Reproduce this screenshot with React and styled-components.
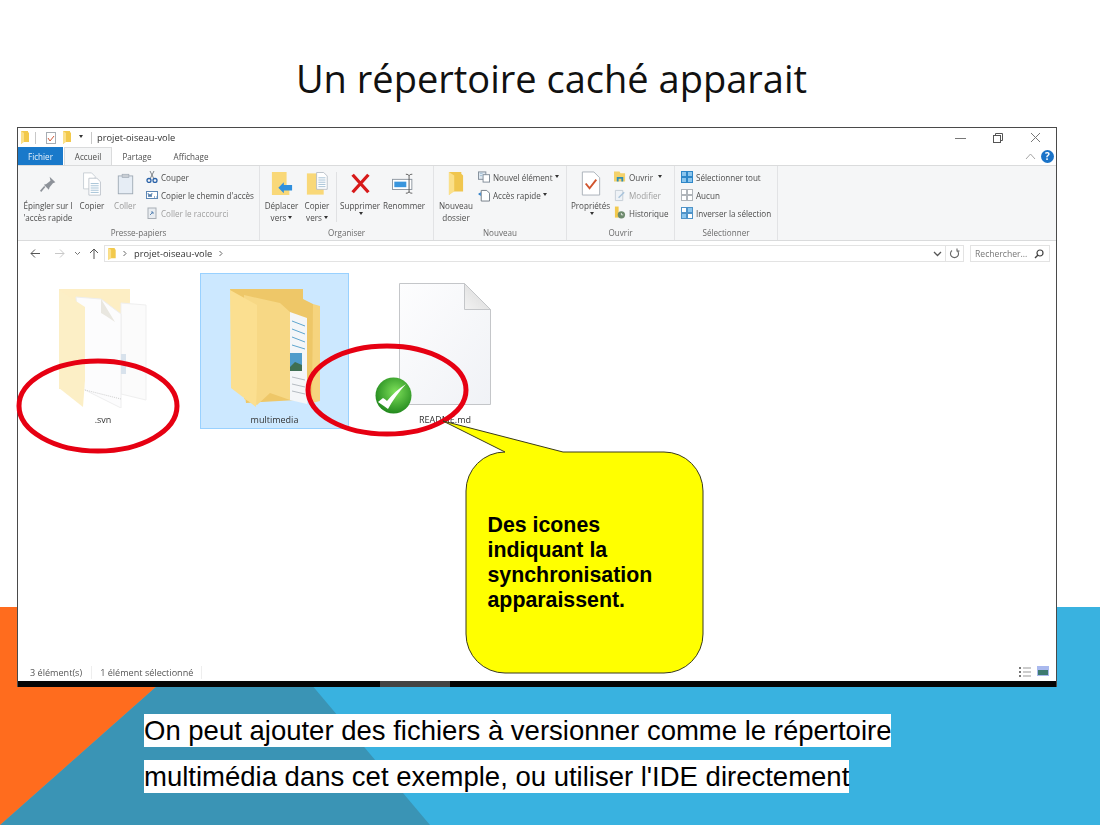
import React from "react";
import styled, { createGlobalStyle } from "styled-components";

const GlobalStyle = createGlobalStyle`
  html, body {
    margin: 0;
    padding: 0;
    background: #fff;
  }
`;

const Page = styled.div`
  position: relative;
  width: 1100px;
  height: 825px;
  overflow: hidden;
  background: #fff;
  font-family: "Open Sans", "Noto Sans", sans-serif;
`;

const Backdrop = styled.svg`
  position: absolute;
  left: 0;
  top: 607px;
`;

const Content = styled.div`
  position: relative;
  display: flex;
  flex-direction: column;
`;

const Title = styled.h1`
  margin: 0;
  height: 127px;
  padding: 54px 0 0 3px;
  box-sizing: border-box;
  text-align: center;
  font-size: 38px;
  line-height: 48px;
  font-weight: 400;
  color: #111;
`;

const Window = styled.div`
  margin-left: 17px;
  width: 1040px;
  height: 560px;
  box-sizing: border-box;
  border: 1px solid #4a4a4a;
  border-bottom: none;
  background: #fff;
  display: flex;
  flex-direction: column;
  font-size: 8.1px;
  color: #4c4c4c;
  filter: blur(0.25px);
`;

const TitleBar = styled.div`
  height: 19px;
  flex: none;
  display: flex;
  align-items: center;
  padding-left: 3px;
  font-size: 9.3px;
  color: #333;
`;

const QuickIcons = styled.div`
  display: flex;
  align-items: center;
  height: 13px;
  margin-right: 5px;
`;

const QuickSlot = styled.span`
  display: flex;
  align-items: center;
  margin-left: ${({ $ml }) => $ml}px;
`;

const QuickSep = styled.span`
  width: 1px;
  height: 12px;
  background: #c8c8c8;
`;

const WindowControls = styled.div`
  margin-left: auto;
  display: flex;
  align-items: center;
  gap: 27px;
  padding-right: 15px;
`;

const TabBar = styled.div`
  height: 18px;
  flex: none;
  display: flex;
  align-items: stretch;
  position: relative;
`;

const FileTab = styled.div`
  width: 45px;
  background: #1979ca;
  color: #e8f2fb;
  display: flex;
  align-items: center;
  justify-content: center;
`;

const Tab = styled.div`
  width: ${({ $w }) => $w}px;
  display: flex;
  align-items: center;
  justify-content: center;
  box-sizing: border-box;
  ${({ $active }) =>
    $active
      ? "background:#f5f6f7;border:1px solid #dadbdc;border-bottom:none;margin-left:1px;"
      : ""}
`;

const TabTail = styled.div`
  margin-left: auto;
  display: flex;
  align-items: center;
  gap: 5px;
  padding-right: 2px;
`;

const HelpDot = styled.div`
  width: 13px;
  height: 13px;
  border-radius: 50%;
  background: #1a73c8;
  color: #fff;
  font-size: 10px;
  font-weight: 700;
  line-height: 13px;
  text-align: center;
`;

const Ribbon = styled.div`
  height: 76px;
  flex: none;
  display: flex;
  background: #f5f6f7;
  border-top: 1px solid #dadbdc;
  border-bottom: 1px solid #dadbdc;
  box-sizing: border-box;
`;

const Group = styled.div`
  width: ${({ $w }) => $w}px;
  box-sizing: border-box;
  display: flex;
  flex-direction: column;
  border-right: 1px solid #e2e3e5;
`;

const GroupBody = styled.div`
  flex: 1;
  display: flex;
  padding-left: ${({ $pad }) => $pad || 0}px;
  padding-top: 2px;
`;

const GroupLabel = styled.div`
  height: 14px;
  line-height: 13px;
  text-align: center;
  color: #6a6a6a;
`;

const BigButton = styled.div`
  width: ${({ $w }) => $w}px;
  flex: none;
  display: flex;
  flex-direction: column;
  align-items: center;
  text-align: center;
  line-height: 12px;
  white-space: nowrap;
  color: ${({ $off }) => ($off ? "#9a9a9a" : "#4c4c4c")};
`;

const BigIcon = styled.div`
  height: 27px;
  margin-top: 2px;
  margin-bottom: 3px;
  display: flex;
  align-items: center;
  justify-content: center;
`;

const Divider = styled.div`
  width: 1px;
  height: 50px;
  margin: 4px 1px 0;
  background: #e0e1e3;
`;

const SmallColumn = styled.div`
  display: flex;
  flex-direction: column;
  padding-left: ${({ $pad }) => $pad || 0}px;
`;

const SmallButton = styled.div`
  height: 18px;
  display: flex;
  align-items: center;
  gap: 3px;
  white-space: nowrap;
  color: ${({ $off }) => ($off ? "#a0a0a0" : "#4c4c4c")};
`;

const Caret = styled.span`
  display: inline-block;
  width: 0;
  height: 0;
  margin: 0 0 2px ${({ $ml }) => ($ml === undefined ? 2 : $ml)}px;
  vertical-align: middle;
  border-left: 2.5px solid transparent;
  border-right: 2.5px solid transparent;
  border-top: 3px solid #333;
`;

const AddressRow = styled.div`
  height: 17px;
  flex: none;
  margin-top: 4px;
  display: flex;
  align-items: stretch;
  color: #333;
  font-size: 9.3px;
`;

const NavButtons = styled.div`
  width: 86px;
  flex: none;
  display: flex;
  align-items: center;
  padding-left: 12px;
  box-sizing: border-box;
`;

const NavSlot = styled.span`
  width: ${({ $w }) => $w}px;
  flex: none;
  display: flex;
  align-items: center;
`;

const AddressBox = styled.div`
  width: 860px;
  box-sizing: border-box;
  display: flex;
  align-items: center;
  gap: 6px;
  padding-left: 3px;
  border: 1px solid #e3e3e3;
`;

const AddressTail = styled.div`
  margin-left: auto;
  display: flex;
  align-items: center;
  gap: 3px;
  height: 100%;
`;

const AddressSep = styled.span`
  width: 1px;
  height: 100%;
  background: #e3e3e3;
`;

const SearchBox = styled.div`
  width: 80px;
  margin-left: 6px;
  box-sizing: border-box;
  display: flex;
  align-items: center;
  justify-content: space-between;
  padding: 0 5px 0 4px;
  border: 1px solid #e3e3e3;
  color: #777;
  font-size: 8.6px;
`;

const FileArea = styled.div`
  flex: 1;
  display: flex;
  align-items: flex-start;
  gap: 21px;
  padding: 11px 0 0 10px;
`;

const FileItem = styled.div`
  width: 150px;
  height: 156px;
  box-sizing: border-box;
  display: flex;
  flex-direction: column;
  align-items: center;
  color: #333;
  font-size: 9px;
  ${({ $selected }) =>
    $selected
      ? "width:149px;margin-left:1px;background:#cce8ff;border:1px solid #99d1ff;"
      : "padding:1px;"}
`;

const FileIcon = styled.div`
  position: relative;
  height: 140px;
  box-sizing: border-box;
  padding-top: ${({ $top }) => $top}px;
  flex: none;
`;

const FileName = styled.div`
  line-height: 12px;
`;

const CheckBadge = styled.svg`
  position: absolute;
  left: -24px;
  top: 103px;
`;

const StatusBar = styled.div`
  height: 18px;
  flex: none;
  display: flex;
  align-items: center;
  color: #555;
  font-size: 9.1px;
  padding: 0 7px 0 12px;
`;

const StatusText = styled.span`
  padding-right: ${({ $pad }) => $pad}px;
  margin-right: 8px;
  border-right: 1px solid #eee;
`;

const StatusIcons = styled.div`
  margin-left: auto;
  display: flex;
  gap: 6px;
`;

const TaskStrip = styled.div`
  height: 6px;
  flex: none;
  background: #050505;
  display: flex;
`;

const TaskActive = styled.div`
  width: 70px;
  margin-left: 362px;
  background: #444;
`;

const Caption = styled.div`
  margin: 27px 0 0 144px;
  display: flex;
  flex-direction: column;
  align-items: flex-start;
  gap: 13px;
  font-family: "Liberation Sans", Arial, sans-serif;
  font-size: 27.5px;
  color: #000;
`;

const CaptionLine = styled.div`
  height: 33px;
  line-height: 33px;
  background: #fff;
  white-space: nowrap;
`;

const Marks = styled.svg`
  position: absolute;
  left: 0;
  top: 0;
  pointer-events: none;
`;

const CalloutText = styled.div`
  position: absolute;
  left: 487.5px;
  top: 513px;
  font-family: "Liberation Sans", Arial, sans-serif;
  font-size: 21.33px;
  font-weight: 700;
  line-height: 25px;
  color: #000;
`;

const Icon = ({ w = 12, h = 12, vb, children }) => (
  <svg width={w} height={h} viewBox={vb || `0 0 ${w} ${h}`} fill="none">
    {children}
  </svg>
);

const SmallFolder = ({ w = 8, h = 13 }) => (
  <Icon w={w} h={h} vb="0 0 8 13">
    <path d="M0 0h7v1l1 1v9H2l-2 2z" fill="#f2c94c" />
    <path d="M0 0l3 2v9l-3 2z" fill="#fbe08a" />
  </Icon>
);

const DocLines = ({ x, y, n, w }) =>
  Array.from({ length: n }, (_, i) => (
    <path key={i} d={`M${x} ${y + i * 2.5}h${w}`} stroke="#9dbcd2" strokeWidth="1" />
  ));

const PinIcon = () => (
  <Icon w={18} h={18} vb="0 0 22 22">
    <path d="M13 2l7 7-3 1-4 5-1 3-6-6 3-1 5-4z" fill="#8d9299" />
    <path d="M7 14l-5 6" stroke="#8d9299" strokeWidth="2" />
  </Icon>
);

const CopyIcon = () => (
  <Icon w={20} h={24} vb="0 0 22 27">
    <path d="M1.500 1h9l4 4v14h-13z" fill="#fff" stroke="#c6ccd3" />
    <path d="M7.500 7h9l4 4v15h-13z" fill="#fff" stroke="#bcc3cb" />
    <DocLines x={9.5} y={13} n={5} w={9} />
  </Icon>
);

const ClipboardIcon = () => (
  <Icon w={17} h={22} vb="0 0 20 25">
    <rect x="1.500" y="3" width="17" height="21" fill="#e6edf5" stroke="#9aa5b1" />
    <rect x="6" y="1" width="8" height="4" fill="#c9ced4" stroke="#9aa5b1" strokeWidth=".7" />
  </Icon>
);

const ScissorsIcon = () => (
  <Icon>
    <path d="M4 0l4 8M8 0L4 8" stroke="#7d8388" strokeWidth="1" />
    <circle cx="3" cy="9.500" r="2" stroke="#2a62a8" strokeWidth="1.300" />
    <circle cx="9" cy="9.500" r="2" stroke="#2a62a8" strokeWidth="1.300" />
  </Icon>
);

const PathIcon = () => (
  <Icon h={8}>
    <rect x=".5" y=".5" width="11" height="7" fill="#fff" stroke="#5d87b5" />
    <path d="M2 2l1 4 1-3 1 3 1-4" stroke="#2b5f99" strokeWidth=".8" />
    <path d="M8 6h1M10 6h.6" stroke="#2b5f99" />
  </Icon>
);

const ShortcutIcon = () => (
  <Icon>
    <rect x="2" y="1" width="8" height="10.500" fill="#e9edf1" stroke="#a8aeb5" />
    <path d="M4 8l3-3M5 5h2v2" stroke="#5d87b5" />
  </Icon>
);

const MoveIcon = () => (
  <Icon w={22} h={24} vb="0 0 24 26">
    <path d="M1 0h16v19h3v6H1z" fill="#f9d878" />
    <path d="M23 14h-9v-3l-6 6 6 6v-3h9z" fill="#2f8fdd" />
  </Icon>
);

const CopyToIcon = () => (
  <Icon w={23} h={24} vb="0 0 26 26">
    <path d="M1 1h19v24H1z" fill="#f9d878" />
    <path d="M12 0h8l4 4v15H12z" fill="#fff" stroke="#b5bdc5" />
    <DocLines x={14} y={6} n={5} w={8} />
  </Icon>
);

const DeleteIcon = () => (
  <Icon w={21} h={21} vb="0 0 24 24">
    <path d="M3 2l18 20M21 2L3 22" stroke="#d71a1a" strokeWidth="3.800" />
  </Icon>
);

const RenameIcon = () => (
  <Icon w={24} h={23} vb="0 0 26 24">
    <rect x=".5" y="7.500" width="21" height="11" fill="#fff" stroke="#8a949e" />
    <rect x="2.500" y="10" width="13" height="6" fill="#3a96dd" />
    <path d="M15 2c2 0 3 .5 3.500 1.500C19 2.500 20 2 22 2M18.500 3.500v18M15 22.500c2 0 3-.5 3.500-1.500.5 1 1.500 1.500 3.500 1.500" stroke="#555" />
  </Icon>
);

const NewFolderIcon = () => (
  <Icon w={16} h={23} vb="0 0 8 13">
    <path d="M0 0h7v1l1 1v9H2l-2 2z" fill="#f0c64f" />
    <path d="M0 0l3 2v9l-3 2z" fill="#fbe08a" />
  </Icon>
);

const NewItemIcon = () => (
  <Icon w={12} h={12} vb="0 0 13 12">
    <rect x=".5" y=".5" width="8" height="8" fill="#dfe8f0" stroke="#7f8b97" />
    <rect x="5.500" y="3.500" width="7" height="8" fill="#fff" stroke="#7f8b97" />
    <DocLines x={2} y={2} n={2} w={3} />
  </Icon>
);

const QuickAccessIcon = () => (
  <Icon w={12} h={13} vb="0 0 13 13">
    <path d="M3.500 1h6l3 3v8.500h-9z" fill="#fff" stroke="#6f7882" />
    <path d="M0 5l3-2v4z" fill="#2f7fc8" />
  </Icon>
);

const PropertiesIcon = () => (
  <Icon w={20} h={25} vb="0 0 20 26">
    <path d="M1 1h12l6 6v18H1z" fill="#fff" stroke="#aab1b9" />
    <path d="M4.500 13l4 5 7-9" stroke="#d1552e" strokeWidth="2" />
  </Icon>
);

const OpenIcon = () => (
  <Icon w={12} h={12} vb="0 0 13 12">
    <path d="M0 0h6l1 2h5v9H0z" fill="#f4d26b" />
    <path d="M3 11V6h7v5H8V8H5v3z" fill="#2f8fb5" />
  </Icon>
);

const ModifyIcon = () => (
  <Icon w={12} h={13} vb="0 0 13 13">
    <path d="M1.500 1h8v11h-8z" fill="#eef2f6" stroke="#c4ccd5" />
    <path d="M5 9l6-6" stroke="#a9c4dc" strokeWidth="1.600" />
  </Icon>
);

const HistoryIcon = () => (
  <Icon w={12} h={14} vb="0 0 13 14">
    <path d="M1 0h4v12H1z" fill="#f2c94c" />
    <circle cx="8" cy="9" r="4" fill="#6d8a6d" />
    <path d="M8 7v2h2" stroke="#fff" strokeWidth=".8" />
  </Icon>
);

const GridIcon = ({ cells, stroke }) => (
  <Icon>
    {cells.map((fill, i) => (
      <rect
        key={i}
        x={i % 2 ? 6.5 : 0.5}
        y={i < 2 ? 0.5 : 6.5}
        width="5"
        height="5"
        fill={fill}
        stroke={stroke}
      />
    ))}
  </Icon>
);

const GhostFolder = () => (
  <svg width="88" height="119" viewBox="0 0 88 119" fill="none">
    <path d="M0 0h71v12l-4 85-67 3z" fill="#fdeec4" />
    <path d="M62 14l25 2v95l-25-6z" fill="#fbfbfb" stroke="#efefef" />
    <path d="M17 8l25 2 20 15v94l-38-19z" fill="#fcfcfd" stroke="#eeeeee" />
    <path d="M42 10l14 23-9-6-5-3z" fill="#e9e7e0" />
    <path d="M62 65h5v20h-5z" fill="#d8e2ec" />
    <path d="M26 101l36 9" stroke="#cfcfcf" strokeDasharray="1 1" />
    <path d="M0 1l26 17v73l-2 27L0 99z" fill="#fcefc6" />
  </svg>
);

const NavFolder = () => (
  <svg width="90" height="118" viewBox="0 0 90 118" fill="none">
    <path d="M0 0h73v10l10 5 1 95-68 4z" fill="#eec768" />
    <path d="M83 15l7 2v95l-8 2z" fill="#f6d47e" />
    <path d="M60 23l17 6v86l-17-4z" fill="#f4f6f8" />
    <path d="M62 32l13 5M62 40l13 5M62 48l13 5M62 56l13 4" stroke="#5fa6cf" />
    <rect x="60" y="64" width="12" height="18" fill="#4f9ccb" />
    <path d="M60 78l5-5 7 3v6H60z" fill="#3f6f52" />
    <path d="M62 88l13 3M62 95l13 3M62 102l13 3" stroke="#b6bcc2" />
    <path d="M14 6l36 8 10 9v88l-20-7-13 12-13-6z" fill="#f7d885" />
    <path d="M0 1l27 15v77l-1 25L1 99z" fill="#fbdf90" />
  </svg>
);

const Document = () => (
  <svg width="92" height="122" viewBox="0 0 92 122" fill="none">
    <defs>
      <linearGradient id="paper" x1="0" y1="0" x2="1" y2="1">
        <stop offset="0" stopColor="#fdfdfe" />
        <stop offset="1" stopColor="#f0f2f6" />
      </linearGradient>
      <linearGradient id="fold" x1="0" y1="1" x2="1" y2="0">
        <stop offset="0" stopColor="#f2f2f2" />
        <stop offset="1" stopColor="#d6d6d6" />
      </linearGradient>
    </defs>
    <path d="M.5.500h65l26 26v95H.5z" fill="url(#paper)" stroke="#c4c6c9" />
    <path d="M65.500.500v26h26z" fill="url(#fold)" stroke="#c4c6c9" />
  </svg>
);

const App = () => (
  <Page>
    <GlobalStyle />
    <Backdrop width="1100" height="218" viewBox="0 0 1100 218">
      <rect width="1100" height="218" fill="#39b2e0" />
      <path d="M246 0L0 218h430z" fill="#3a94b5" />
      <path d="M0 0h246L0 218z" fill="#ff6c1e" />
    </Backdrop>
    <Content>
      <Title>Un répertoire caché apparait</Title>
      <Window>
        <TitleBar>
          <QuickIcons>
            <SmallFolder />
            <QuickSlot $ml={6}><QuickSep /></QuickSlot>
            <QuickSlot $ml={10}>
              <Icon w={10} h={12}>
                <rect x=".5" y=".5" width="9" height="11" fill="#fff" stroke="#a7adb3" />
                <path d="M2 6l2 3 4-5" stroke="#cf5a3a" />
              </Icon>
            </QuickSlot>
            <QuickSlot $ml={7}><SmallFolder /></QuickSlot>
            <QuickSlot $ml={8}><Caret $ml={0} /></QuickSlot>
            <QuickSlot $ml={8}><QuickSep /></QuickSlot>
          </QuickIcons>
          projet-oiseau-vole
          <WindowControls>
            <Icon w={11} h={10}>
              <path d="M0 5.500h11" stroke="#777" />
            </Icon>
            <Icon w={10} h={10}>
              <rect x=".5" y="2.500" width="7" height="7" stroke="#555" />
              <path d="M2.500 2.500v-2h7v7h-2" stroke="#555" />
            </Icon>
            <Icon w={11} h={11}>
              <path d="M1 1l9 9M10 1l-9 9" stroke="#777" />
            </Icon>
          </WindowControls>
        </TitleBar>
        <TabBar>
          <FileTab>Fichier</FileTab>
          <Tab $w={48} $active>Accueil</Tab>
          <Tab $w={50}>Partage</Tab>
          <Tab $w={58}>Affichage</Tab>
          <TabTail>
            <Icon w={11} h={7}>
              <path d="M1 6l4.500-5L10 6" stroke="#a6a6a6" />
            </Icon>
            <HelpDot>?</HelpDot>
          </TabTail>
        </TabBar>
        <Ribbon>
          <Group $w={242}>
            <GroupBody>
              <BigButton $w={60}>
                <BigIcon><PinIcon /></BigIcon>
                Épingler sur l
                <br />
                'accès rapide
              </BigButton>
              <BigButton $w={28}>
                <BigIcon><CopyIcon /></BigIcon>
                Copier
              </BigButton>
              <BigButton $w={38} $off>
                <BigIcon><ClipboardIcon /></BigIcon>
                Coller
              </BigButton>
              <SmallColumn $pad={2}>
                <SmallButton><ScissorsIcon />Couper</SmallButton>
                <SmallButton><PathIcon />Copier le chemin d'accès</SmallButton>
                <SmallButton $off><ShortcutIcon />Coller le raccourci</SmallButton>
              </SmallColumn>
            </GroupBody>
            <GroupLabel>Presse-papiers</GroupLabel>
          </Group>
          <Group $w={174}>
            <GroupBody $pad={4}>
              <BigButton $w={35}>
                <BigIcon><MoveIcon /></BigIcon>
                Déplacer
                <span>vers<Caret /></span>
              </BigButton>
              <BigButton $w={36}>
                <BigIcon><CopyToIcon /></BigIcon>
                Copier
                <span>vers<Caret /></span>
              </BigButton>
              <Divider />
              <BigButton $w={44}>
                <BigIcon><DeleteIcon /></BigIcon>
                Supprimer
                <Caret />
              </BigButton>
              <BigButton $w={44}>
                <BigIcon><RenameIcon /></BigIcon>
                Renommer
              </BigButton>
            </GroupBody>
            <GroupLabel>Organiser</GroupLabel>
          </Group>
          <Group $w={133}>
            <GroupBody>
              <BigButton $w={44}>
                <BigIcon><NewFolderIcon /></BigIcon>
                Nouveau
                <br />
                dossier
              </BigButton>
              <SmallColumn>
                <SmallButton><NewItemIcon />Nouvel élément<Caret $ml={-1} /></SmallButton>
                <SmallButton><QuickAccessIcon />Accès rapide<Caret $ml={-1} /></SmallButton>
              </SmallColumn>
            </GroupBody>
            <GroupLabel>Nouveau</GroupLabel>
          </Group>
          <Group $w={108}>
            <GroupBody>
              <BigButton $w={47}>
                <BigIcon><PropertiesIcon /></BigIcon>
                Propriétés
                <Caret />
              </BigButton>
              <SmallColumn>
                <SmallButton><OpenIcon />Ouvrir<Caret /></SmallButton>
                <SmallButton $off><ModifyIcon />Modifier</SmallButton>
                <SmallButton><HistoryIcon />Historique</SmallButton>
              </SmallColumn>
            </GroupBody>
            <GroupLabel>Ouvrir</GroupLabel>
          </Group>
          <Group $w={103}>
            <GroupBody $pad={6}>
              <SmallColumn>
                <SmallButton>
                  <GridIcon cells={["#8cc6ee", "#8cc6ee", "#8cc6ee", "#8cc6ee"]} stroke="#2f87c8" />
                  Sélectionner tout
                </SmallButton>
                <SmallButton>
                  <GridIcon cells={["#fff", "#fff", "#fff", "#fff"]} stroke="#b0b5ba" />
                  Aucun
                </SmallButton>
                <SmallButton>
                  <GridIcon cells={["#fff", "#8cc6ee", "#8cc6ee", "#fff"]} stroke="#4f93c8" />
                  Inverser la sélection
                </SmallButton>
              </SmallColumn>
            </GroupBody>
            <GroupLabel>Sélectionner</GroupLabel>
          </Group>
        </Ribbon>
        <AddressRow>
          <NavButtons>
            <NavSlot $w={25}>
              <Icon w={10} h={9}>
                <path d="M10 4.500H1M5 .5l-4 4 4 4" stroke="#555" />
              </Icon>
            </NavSlot>
            <NavSlot $w={19}>
              <Icon w={10} h={9}>
                <path d="M0 4.500h9M5 .5l4 4-4 4" stroke="#c8c8c8" />
              </Icon>
            </NavSlot>
            <NavSlot $w={15}>
              <Icon w={7} h={5}>
                <path d="M1 1l2.500 2.500L6 1" stroke="#777" />
              </Icon>
            </NavSlot>
            <NavSlot $w={10}>
              <Icon w={10} h={11}>
                <path d="M5 11V1M1 5l4-4 4 4" stroke="#555" />
              </Icon>
            </NavSlot>
          </NavButtons>
          <AddressBox>
            <SmallFolder h={12} />
            <Icon w={6} h={7}>
              <path d="M1.500 1L4 3.500 1.500 6" stroke="#666" />
            </Icon>
            <span>projet-oiseau-vole</span>
            <Icon w={6} h={7}>
              <path d="M1.500 1L4 3.500 1.500 6" stroke="#666" />
            </Icon>
            <AddressTail>
              <Icon w={9} h={6}>
                <path d="M1 1l3.500 3.500L8 1" stroke="#555" strokeWidth="1.300" />
              </Icon>
              <AddressSep />
              <Icon w={11} h={11}>
                <path d="M3 2.500a4 4 0 1 0 5 0M8 .5v2.500h2.500" stroke="#666" strokeWidth="1.100" />
              </Icon>
              <span />
            </AddressTail>
          </AddressBox>
          <SearchBox>
            Rechercher...
            <Icon w={10} h={10}>
              <circle cx="6" cy="4" r="3" stroke="#444" strokeWidth="1.200" />
              <path d="M4 6L1 9" stroke="#444" strokeWidth="1.500" />
            </Icon>
          </SearchBox>
        </AddressRow>
        <FileArea>
          <FileItem>
            <FileIcon $top={15}><GhostFolder /></FileIcon>
            <FileName>.svn</FileName>
          </FileItem>
          <FileItem $selected>
            <FileIcon $top={15}><NavFolder /></FileIcon>
            <FileName>multimedia</FileName>
          </FileItem>
          <FileItem>
            <FileIcon $top={9}>
              <Document />
              <CheckBadge width="37" height="37" viewBox="0 0 37 37" fill="none">
                <defs>
                  <radialGradient id="badge" cx=".55" cy=".4" r=".6">
                    <stop offset="0" stopColor="#7ee05a" />
                    <stop offset="1" stopColor="#238a1e" />
                  </radialGradient>
                </defs>
                <circle cx="18.500" cy="18.500" r="18" fill="url(#badge)" />
                <path d="M3 25L8 21Q10 22 12 24Q20 14 31 7Q20 19 13 32Q9 29 3 25z" fill="#fff" />
              </CheckBadge>
            </FileIcon>
            <FileName>README.md</FileName>
          </FileItem>
        </FileArea>
        <StatusBar>
          <StatusText $pad={9}>3 élément(s)</StatusText>
          <StatusText $pad={8}>1 élément sélectionné</StatusText>
          <StatusIcons>
            <Icon w={12} h={12}>
              <path d="M1 1v2M1 5v2M1 9v2" stroke="#777" strokeWidth="2" />
              <path d="M4 2h8M4 6h8M4 10h8" stroke="#999" />
            </Icon>
            <Icon w={12} h={10}>
              <rect width="12" height="10" fill="#a9b9ee" />
              <rect x="1" y="4" width="10" height="5" fill="#3d7a70" />
            </Icon>
          </StatusIcons>
        </StatusBar>
        <TaskStrip>
          <TaskActive />
        </TaskStrip>
      </Window>
      <Caption>
        <CaptionLine>On peut ajouter des fichiers à versionner comme le répertoire</CaptionLine>
        <CaptionLine>multimédia dans cet exemple, ou utiliser l'IDE directement</CaptionLine>
      </Caption>
    </Content>
    <Marks width="1100" height="825" viewBox="0 0 1100 825" fill="none">
      <ellipse cx="98" cy="406" rx="79" ry="45" stroke="#e60012" strokeWidth="5" />
      <ellipse cx="387" cy="390" rx="79" ry="44" stroke="#e60012" strokeWidth="5" />
      <path
        d="M443 421L563 452H664a39 39 0 0 1 39 39V634a39 39 0 0 1-39 39H505a39 39 0 0 1-39-39V491a39 39 0 0 1 39-39z"
        fill="#ffff00"
        stroke="#3a3a1a"
      />
    </Marks>
    <CalloutText>
      Des icones
      <br />
      indiquant la
      <br />
      synchronisation
      <br />
      apparaissent.
    </CalloutText>
  </Page>
);

export default App;
